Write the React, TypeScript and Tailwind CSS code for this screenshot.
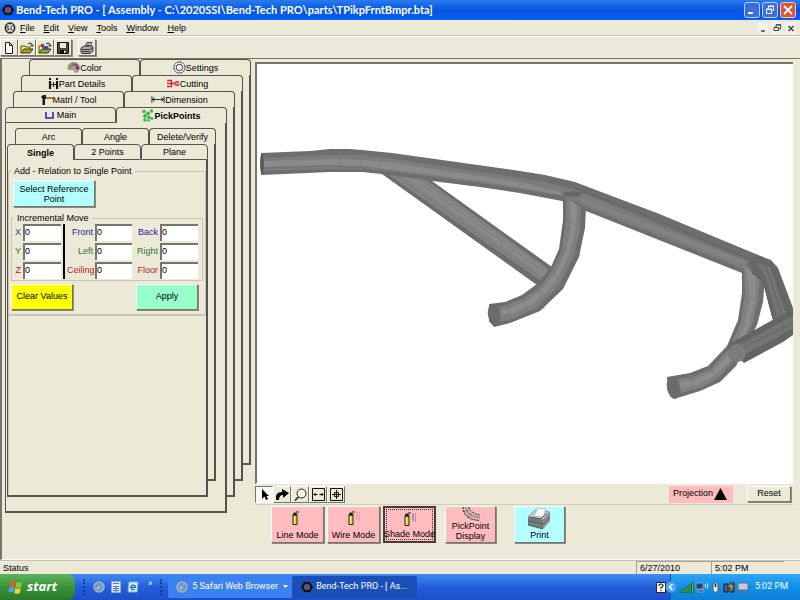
import type { ReactNode } from "react";

type Tab = { label: string; icon?: ReactNode; active?: boolean };

const raised = "border border-t-white border-l-white border-r-[#77756a] border-b-[#77756a] shadow-[1px_1px_0_#8d8b80]";

/* ---------- icons ---------- */

function AppIcon() {
  return (
    <svg className="w-3 h-3 shrink-0" viewBox="0 0 12 12">
      <circle cx="6" cy="6" r="4.6" fill="#1c1830" stroke="#111" strokeWidth="1.4" />
      <path d="M0 6h2M10 6h2M3 1l1 1M9 1L8 2M3 11l1-1M9 11l-1-1" stroke="#111" strokeWidth="1.3" />
      <path d="M4 4h4v4H4zM4 6h4" stroke="#9a7a9a" fill="none" />
    </svg>
  );
}

function DocIcon() {
  return (
    <svg className="w-3 h-3 shrink-0" viewBox="0 0 12 12">
      <ellipse cx="6" cy="6" rx="4.6" ry="5" fill="#eee" stroke="#222" strokeWidth="1.6" />
      <path d="M5 4H3v2h2v2H3M9 4H7v4h2M5 2h2M5 10h2" stroke="#333" fill="none" strokeWidth=".9" />
    </svg>
  );
}

function NewIcon() {
  return (
    <svg className="w-3 h-3" viewBox="0 0 12 12">
      <path d="M2.5.5h4l3 3v8h-7z" fill="#fff" stroke="#222" />
      <path d="M6.5.5v3h3" fill="none" stroke="#222" />
    </svg>
  );
}

function OpenIcon({ parts = false }: { parts?: boolean }) {
  return (
    <svg className="w-[14px] h-3" viewBox="0 0 14 12">
      <path d="M1 11V4h4l1 1h4v2" fill="#f3ea6a" stroke="#55500c" />
      <path d="M1 11l3-4h9l-3 4z" fill="#a8a01e" stroke="#3c390a" />
      <path d="M8 2q2-2 4 0v2M10.500 3L12 4.500 13.500 3" fill="none" stroke="#222" />
      {parts && (
        <>
          <path d="M3 2h3v3H3z" fill="#d22" />
          <path d="M6 4h4v4H6z" fill="#1c54d0" />
          <path d="M4 5h2v2H4z" fill="#2a9a3a" />
        </>
      )}
    </svg>
  );
}

function SaveIcon() {
  return (
    <svg className="w-3 h-3" viewBox="0 0 12 12">
      <path d="M.5.5h11v11h-11z" fill="#4b4b28" stroke="#111" />
      <path d="M3 1h6v5H3z" fill="#e8e8e0" />
      <path d="M3 8h6v3.500H3z" fill="#111" />
      <path d="M7 8.500h1.500v2.500H7z" fill="#eee" />
    </svg>
  );
}

function PrinterSmall() {
  return (
    <svg className="w-[14px] h-3" viewBox="0 0 14 12">
      <path d="M5 5l2-4.500h5L10 5z" fill="#fff" stroke="#333" strokeWidth=".9" />
      <path d="M1 6l3-2h8l1 1v4l-3 2.500H2L1 10z" fill="#a8a8a8" stroke="#222" strokeWidth=".9" />
      <path d="M1.500 7.500h8.500l3-2M2 9.500h8M7 2h3M6.500 3.500h3" stroke="#222" strokeWidth=".8" fill="none" />
    </svg>
  );
}

const paletteIcon = (
  <svg className="w-[13px] h-[11px]" viewBox="0 0 13 11">
    <path d="M1 6C1 2 4 .5 7 .5s5.500 2 5.500 5-2 5-3.500 5-1-3-3-3-5 1-5-1.500z" fill="#a99a94" stroke="#8a7570" strokeWidth=".7" />
    <circle cx="3.500" cy="4.500" r="1.400" fill="#4bb02e" />
    <circle cx="6" cy="2.600" r="1.300" fill="#d83a2c" />
    <circle cx="9" cy="3.200" r="1.400" fill="#7b3fb8" />
    <circle cx="10.500" cy="6" r="1.400" fill="#2d2f8e" />
    <circle cx="9.500" cy="8.500" r="1.100" fill="#c8a23a" />
  </svg>
);

const gearIcon = (
  <svg className="w-[13px] h-[13px]" viewBox="0 0 13 13">
    <circle cx="6.500" cy="6.500" r="5.600" fill="#eee" stroke="#222" strokeDasharray="2.200 .7" />
    <circle cx="6.500" cy="6.500" r="3.200" fill="#fff" stroke="#334" />
  </svg>
);

const partIcon = (
  <svg className="w-[11px] h-[11px]" viewBox="0 0 11 11">
    <path d="M2 3v8M9 3v8" stroke="#111" strokeWidth="2.200" />
    <path d="M1 0h2v2H1zM8 0h2v2H8z" fill="#111" />
    <path d="M3 6.500h5M5.500 4v5" stroke="#111" />
  </svg>
);

const cuttingIcon = (
  <svg className="w-[13px] h-[9px]" viewBox="0 0 13 9">
    <path d="M0 1.500h4.500v6H0M0 4.500h8" fill="none" stroke="#d8262a" strokeWidth="1.300" />
    <path d="M6 4.500l3-2.500h3v5H9z" fill="#e04a48" />
    <path d="M9 4.500h4" stroke="#f4b4b0" />
  </svg>
);

const hammerIcon = (
  <svg className="w-[12px] h-[10px]" viewBox="0 0 12 10">
    <path d="M4 3h8" stroke="#c47a1c" strokeWidth="2" />
    <path d="M0 2l2-2h3v4H4v6H1.500V4z" fill="#1a1a1a" />
  </svg>
);

const dimensionIcon = (
  <svg className="w-[14px] h-[9px]" viewBox="0 0 15 9">
    <path d="M1 1v7M14 1v7M1 4.500h13M4 2.500l-2.500 2L4 6.500M11 2.500l2.500 2-2.500 2" fill="none" stroke="#222" />
  </svg>
);

const mainIcon = (
  <svg className="w-[9px] h-[7px] mr-[3px]" viewBox="0 0 9 7">
    <path d="M1 0v6h7V0" fill="none" stroke="#2a24c8" strokeWidth="1.600" />
  </svg>
);

const pickIcon = (
  <svg className="w-[12px] h-[13px]" viewBox="0 0 12 13" fill="#35b84a">
    <circle cx="2" cy="2.500" r="1.700" />
    <circle cx="6" cy="4.500" r="1.900" />
    <circle cx="9.500" cy="2" r="1.700" />
    <circle cx="3" cy="7" r="1.900" />
    <circle cx="7" cy="8.500" r="1.700" />
    <circle cx="3" cy="11" r="1.800" />
    <circle cx="10" cy="9.500" r="1.500" />
    <circle cx="6.500" cy="11.500" r="1.200" />
  </svg>
);

function SprayCan({ spray }: { spray: "none" | "light" | "dark" }) {
  return (
    <svg className="w-[22px] h-[15px]" viewBox="0 0 22 15">
      <path d="M6 4h4v9.500H6z" fill="#e9cf2a" stroke="#222" />
      <path d="M6 4l1-2h2l1 2zM9 1h3" fill="#222" stroke="#222" />
      <path d="M7.500 5v8" stroke="#fff79a" />
      {spray !== "none" && (
        <path
          d="M13 2l2-1v9l-2-2zM16 1h1v9h-1z"
          fill={spray === "dark" ? "#8f8a90" : "#dba6aa"}
          opacity=".8"
        />
      )}
    </svg>
  );
}

function PickPipe() {
  return (
    <svg className="w-5 h-[14px] shrink-0" viewBox="0 0 20 14" fill="none">
      <path d="M5 0q0 10 14 11" stroke="#d9b0b2" strokeWidth="6" />
      <path d="M2 0q0 12 16 13.500M8 0q1 6 11 8" stroke="#222" strokeDasharray="2 1" />
      <path d="M5 0q0 9 14 10.500M3 5l5-2M7 10l3-4" stroke="#444" strokeDasharray="1 1" />
    </svg>
  );
}

function PrinterBig() {
  return (
    <svg className="w-[25px] h-[23px] shrink-0" viewBox="0 0 25 23">
      <path d="M1 10L8 3l15 2v9l-7 8L1 18z" fill="#8d8d90" />
      <path d="M1 10l7-7 15 2-7 8z" fill="#c9cccb" stroke="#777" strokeWidth=".6" />
      <path d="M7 9l4-8 8 1-3 8z" fill="#fff" stroke="#999" strokeWidth=".6" />
      <path d="M3 10l11 2 6-6" fill="none" stroke="#555" />
      <path d="M1 14l15 3 7-7M1 18l15 4" stroke="#555" fill="none" strokeWidth=".9" />
      <path d="M3 15l10 2v2L3 17z" fill="#6fa37d" />
      <path d="M1 10l15 3v9L1 18z" fill="#57575b" opacity=".35" />
    </svg>
  );
}

function Globe() {
  return (
    <svg className="w-3 h-3 shrink-0" viewBox="0 0 12 12">
      <circle cx="6" cy="6" r="5" fill="#5f9bd6" stroke="#a9b4bf" strokeWidth="1.500" />
      <path d="M8.500 3L6.800 6.800 3.500 9l1.700-3.800z" fill="#e8e2dc" />
      <path d="M8.500 3L6.800 6.800 5.200 5.200z" fill="#c86a5c" />
    </svg>
  );
}

function WindowsFlag() {
  return (
    <svg className="w-[15px] h-[14px]" viewBox="0 0 15 14">
      <path d="M2.500 2Q5 0 7.500 1.500L6.500 6.500Q4 5 1.500 6.500z" fill="#ee5a2c" />
      <path d="M8.500 2Q11 3.500 14 2l-1 5q-3 1.500-5.500 0z" fill="#8ccb3e" />
      <path d="M1.300 7.500Q4 6 6.300 7.500l-1 5Q3 11 .3 12.500z" fill="#5a9bf0" />
      <path d="M7.300 8q2.700 1.500 5.500 0l-1 5Q9 14.500 6.300 13z" fill="#f8cf3a" />
    </svg>
  );
}

/* ---------- stacked tab control ---------- */

function TabRow({ tabs, indent, front }: { tabs: Tab[]; indent: string; front: boolean }) {
  return (
    <div role="tablist" className={`flex h-4 ${indent}`}>
      {tabs.map((t) => (
        <button
          key={t.label}
          role="tab"
          aria-selected={!!t.active}
          className={`flex flex-1 items-center justify-center whitespace-nowrap rounded-t-[4px] border border-[#55534a] leading-3 ${
            front && !t.active ? "" : "border-b-0"
          } ${t.active ? "font-bold" : ""}`}
        >
          {t.icon}
          {t.label}
        </button>
      ))}
    </div>
  );
}

const indents = ["", "ml-2", "ml-4", "ml-6"];

// rows go from the back sheet to the front one; every sheet behind shows 8px at the right
function TabStack({ rows, edge, children }: { rows: Tab[][]; edge: string; children: ReactNode }) {
  const [row, ...rest] = rows;
  const front = rest.length === 0;
  return (
    <div className="flex min-w-0 flex-1 flex-col">
      <TabRow tabs={row} indent={indents[rest.length]} front={front} />
      {front ? (
        <div className={`flex flex-col border-b-2 border-l border-r-2 border-[#55534a] ${edge}`}>
          {children}
        </div>
      ) : (
        <div className="flex items-start">
          <TabStack rows={rest} edge={edge}>
            {children}
          </TabStack>
          <div className={`w-2 shrink-0 border-b-2 border-r-2 border-[#55534a] ${edge}`} />
        </div>
      )}
    </div>
  );
}

const mainTabs: Tab[][] = [
  [{ label: "Color", icon: paletteIcon }, { label: "Settings", icon: gearIcon }],
  [{ label: "Part Details", icon: partIcon }, { label: "Cutting", icon: cuttingIcon }],
  [{ label: "Matrl / Tool", icon: hammerIcon }, { label: "Dimension", icon: dimensionIcon }],
  [{ label: "Main", icon: mainIcon }, { label: "PickPoints", icon: pickIcon, active: true }],
];

const pointTabs: Tab[][] = [
  [{ label: "Arc" }, { label: "Angle" }, { label: "Delete/Verify" }],
  [{ label: "Single", active: true }, { label: "2 Points" }, { label: "Plane" }],
];

function Field({ name, color }: { name: string; color: string }) {
  return (
    <>
      <label htmlFor={name} className={`self-center text-right ${color}`}>
        {name}
      </label>
      <input
        id={name}
        defaultValue="0"
        className="h-[17px] w-full min-w-0 border-l-2 border-t-2 border-[#77756a] bg-white pb-[3px] text-[9px] leading-3"
      />
    </>
  );
}

function PointForm() {
  return (
    <>
      <fieldset className="mt-[5px] min-w-0 border border-[#c9c6b5] px-[2px] pb-1">
        <legend className="px-[3px] leading-3">Add - Relation to Single Point</legend>
        <button className={`mt-[3px] ml-[2px] h-[27px] w-[82px] bg-[#b2ffff] leading-[10px] ${raised}`}>
          Select Reference Point
        </button>
        <fieldset className="mt-[5px] min-w-0 border border-[#c9c6b5] pl-[2px] pb-px">
          <legend className="px-[3px] leading-3">Incremental Move</legend>
          <div className="grid grid-cols-[7px_38px_2px_26px_37px_24px_38px] gap-x-[2px] gap-y-[2px]">
            <Field name="X" color="text-[#3a36a8]" />
            <div className="row-span-3 bg-black" />
            <Field name="Front" color="text-[#1a1a9c]" />
            <Field name="Back" color="text-[#1a1a9c]" />
            <Field name="Y" color="text-[#2c7a2c]" />
            <Field name="Left" color="text-[#2c7a2c]" />
            <Field name="Right" color="text-[#2c7a2c]" />
            <Field name="Z" color="text-[#b01c24]" />
            <Field name="Ceiling" color="text-[#b01c24]" />
            <Field name="Floor" color="text-[#b01c24]" />
          </div>
        </fieldset>
        <div className="mt-[3px] mr-[5px] flex justify-between">
          <button className={`h-[26px] w-[62px] bg-[#ffff00] ${raised}`}>Clear Values</button>
          <button className={`h-[26px] w-[62px] bg-[#97ffca] ${raised}`}>Apply</button>
        </div>
      </fieldset>
      <div className="flex-1 border-l border-t border-[#c9c6b5]" />
    </>
  );
}

/* ---------- 3D view ---------- */

function Model() {
  return (
    <svg className="h-full w-full" viewBox="257 64 536 420" preserveAspectRatio="xMinYMin slice" fill="none" strokeLinejoin="round">
      {/* diagonal brace */}
      <path d="M382 174L388 160 415 168 432 181 552 267 537 285z" fill="#6c6c6c" />
      <path d="M386 173L410 168 550 270 541 281z" fill="#828282" />
      <path d="M391 168L410 173 549 272 545 277z" fill="#8a8a8a" />
      <path d="M388 170L542 279M400 169L549 275" stroke="#7a7a7a" strokeWidth=".8" />

      {/* main tube */}
      <path d="M261 153L310 151 330 149 350 149 362 150 392 153 520 171 545 175 575 182 617 198 657 213 763 257 770 268 762 280 742 273 586 211 562 201 520 193 480 187 432 181 382 174 362 172 330 172 261 175z" fill="#6e6e6e" />
      <path d="M263 158L330 155 362 155 395 159 520 178 545 182 573 189 615 206 750 262 743 269 586 207 562 196 520 189 480 183 390 171 362 169 330 169 263 171z" fill="#7c7c7c" />
      <path d="M263 161L335 159 365 160 395 163 520 182 560 192 562 195 480 181 385 169 365 166 330 165 263 167z" fill="#8b8b8b" />
      <path d="M578 197L745 261 742 265 582 202z" fill="#838383" />
      <path d="M575 188L660 221 752 260" stroke="#666" strokeWidth="1.200" />
      <path d="M340 150v22M360 151l1 21M382 153l-4 20M521 172l-2 20M545 175l-6 21" stroke="#7a7a7a" strokeWidth=".6" />
      <path d="M262 168L330 166 370 168" stroke="#747474" />
      <ellipse cx="262" cy="164" rx="2" ry="11" fill="#5d5d5d" />

      {/* right leg */}
      <path d="M742 272L742 293 738 320 727 346 708 366 690 373 667 377 668 392 674 399 700 391 720 382 736 366 757 325 763 302 765 278 752 270z" fill="#6e6e6e" />
      <path d="M744 265L745 295 741 322 730 348 711 369 692 377 678 379 681 393 702 387 718 378 733 361 752 325 758 300 760 276 750 268z" fill="#828282" />
      <path d="M746 268L750 297 745 326 731 353 712 372 694 380 680 383 680 388 697 385 716 375 735 355 749 326 755 299 756 275z" fill="#8d8d8d" />
      <path d="M742 299h21M728 348l9 14M708 366l12 15M690 373l3 18" stroke="#757575" strokeWidth=".8" />
      <ellipse cx="673" cy="388" rx="6" ry="11" fill="#6b6b6b" transform="rotate(-12 673 388)" />

      {/* far end of the main tube */}
      <path d="M748 262L756 255 763 257 771 260 778 268 793 308 793 320 773 320 763 281 752 273z" fill="#676767" />
      <path d="M756 262L770 267 787 318 777 318 766 278z" fill="#757575" />
      <path d="M765 264L783 318M770 262L790 314" stroke="#5f5f5f" strokeWidth=".9" />

      {/* middle leg */}
      <path d="M563 195L563 220 559 249 551 267 537 284 522 295 505 302 489 304 489 321 494 327 510 323 540 311 563 289 579 257 585 228 586 207 575 202z" fill="#6d6d6d" />
      <path d="M566 197L566 221 562 250 553 269 540 287 524 298 507 305 499 307 500 322 512 319 537 308 559 286 574 256 580 228 581 207z" fill="#7f7f7f" />
      <path d="M569 200L571 224 566 251 556 272 542 289 526 301 508 309 502 310 502 315 514 313 534 304 555 283 569 255 576 228 577 206z" fill="#8d8d8d" />
      <path d="M563 221l22 6M560 249l20 6M551 268l13 20M537 284l7 25M522 295l6 21M507 302l5 20" stroke="#777" strokeWidth=".7" />
      <path d="M563 193l11-2 9 2-6 4-12-1z" fill="#666" />
      <ellipse cx="494" cy="315" rx="6" ry="11" fill="#6b6b6b" transform="rotate(-10 494 315)" />

      {/* cross tube coming towards the viewer */}
      <path d="M727 347L731 343 778 317 793 311 793 335 783 342 744 363z" fill="#646464" />
      <path d="M736 345L782 321 793 316 793 328 778 337 744 355z" fill="#757575" />
      <path d="M742 348L793 323M740 345L782 321M780 318l6 21" stroke="#5f5f5f" strokeWidth=".8" />
      <circle cx="737" cy="353" r="9" fill="#7c7c7c" />
      <path d="M752 273L763 281 773 319" stroke="#5d5d5d" />
    </svg>
  );
}

/* ---------- view tools ---------- */

const viewTools: { label: string; icon: ReactNode }[] = [
  { label: "Select", icon: <path d="M4 1v10l2.500-2.500L8 12l2-1-1.500-3H11z" fill="#000" /> },
  { label: "Rotate", icon: <path d="M0 12V8q1-4 6-4V1l7 4-6 5V7Q3 7 3 12z" fill="#000" /> },
  {
    label: "Zoom",
    icon: (
      <>
        <circle cx="7.500" cy="5.500" r="4.500" fill="#f4f4ee" stroke="#222" />
        <path d="M4.500 9L1 12.500" stroke="#222" strokeWidth="1.600" />
      </>
    ),
  },
  { label: "Fit width", icon: <path d="M.5.5h12v12H.5zM2 6.500h3.500M7.500 6.500H11M3.500 5L2 6.500 3.500 8M9.500 5L11 6.500 9.500 8" stroke="#111" /> },
  { label: "Fit all", icon: <path d="M.5.5h12v12H.5zM2 6.500h9M6.500 2v9M4.500 4.500h4v4h-4z" stroke="#111" /> },
];

const modes: { label: string; spray: "none" | "light" | "dark" }[] = [
  { label: "Line Mode", spray: "none" },
  { label: "Wire Mode", spray: "light" },
  { label: "Shade Mode", spray: "dark" },
];

function ViewPanel() {
  return (
    <main className="ml-1 flex min-w-0 flex-1 flex-col pr-[7px] pt-[3px]">
      <div className="min-h-0 flex-1 basis-0 overflow-hidden border-l-2 border-t-2 border-b border-[#77756a] border-b-white bg-white">
        <Model />
      </div>
      <div className="flex h-[21px] items-center border-b border-[#d2cfbf]">
        <div className="flex">
          {viewTools.map((t, i) => (
            <button
              key={t.label}
              aria-label={t.label}
              className={`flex h-[17px] w-[18px] items-center justify-center border ${
                i === 0 ? "border-[#77756a] border-b-white border-r-white bg-[#f8f7f0]" : "border-white border-b-[#77756a] border-r-[#77756a]"
              }`}
            >
              <svg className="h-[13px] w-[13px]" viewBox="0 0 13 13" fill="none">
                {t.icon}
              </svg>
            </button>
          ))}
        </div>
        <button className="ml-auto flex h-[17px] w-16 items-center justify-between bg-[#ffbcbe] pl-1 pr-[6px]">
          Projection
          <svg className="h-3 w-[13px]" viewBox="0 0 13 12">
            <path d="M6.500 0L13 12H0z" fill="#000" />
          </svg>
        </button>
        <button className={`ml-[14px] mr-[2px] h-4 w-[44px] ${raised}`}>Reset</button>
      </div>
      <div className="flex pb-4 pl-4 pt-px">
        {modes.map((m) => (
          <button
            key={m.label}
            className={`mr-[3px] flex h-[37px] w-[53px] flex-col items-center justify-between whitespace-nowrap bg-[#ffbcbe] pb-px pt-1 leading-3 ${
              m.spray === "dark" ? "border-2 border-[#4a3a38] outline-1 outline-dotted outline-[#333] -outline-offset-4" : raised
            }`}
          >
            <SprayCan spray={m.spray} />
            {m.label}
          </button>
        ))}
        <button className={`ml-[6px] flex h-[37px] w-[51px] flex-col items-center bg-[#ffbcbe] leading-[10px] ${raised}`}>
          <PickPipe />
          PickPoint Display
        </button>
        <button className={`ml-[18px] flex h-[37px] w-[51px] flex-col items-center bg-[#b2ffff] leading-[11px] ${raised}`}>
          <PrinterBig />
          Print
        </button>
      </div>
    </main>
  );
}

/* ---------- window frame ---------- */

function TitleBar() {
  return (
    <header className="flex h-5 items-center bg-linear-to-b from-[#2a7cf0] via-[#0553dd] to-[#0660f8] pl-[2px] pr-1 text-white">
      <AppIcon />
      <h1 className="ml-[2px] truncate font-[Lato,sans-serif] text-[11px] font-bold leading-4">
        Bend-Tech PRO - [ Assembly - C:\2020SSI\Bend-Tech PRO\parts\TPikpFrntBmpr.bta]
      </h1>
      <div className="ml-auto flex gap-[2px]">
        <button aria-label="Minimize" className="h-4 w-4 rounded-[3px] border border-[#bcd2fa] bg-[#3b6fe0]">
          <svg viewBox="0 0 14 14"><path d="M3 10h5" stroke="#fff" strokeWidth="2" /></svg>
        </button>
        <button aria-label="Restore" className="h-4 w-4 rounded-[3px] border border-[#bcd2fa] bg-[#3b6fe0]">
          <svg viewBox="0 0 14 14" fill="none" stroke="#fff"><path d="M3.500 6.500h5v4h-5zM5.500 6V3.500h5v4H9M3 6h6M5 3h6" /></svg>
        </button>
        <button aria-label="Close" className="h-4 w-4 rounded-[3px] border border-[#f3cabf] bg-[#dc5535]">
          <svg viewBox="0 0 14 14"><path d="M3 3l8 8M11 3l-8 8" stroke="#fff" strokeWidth="1.800" /></svg>
        </button>
      </div>
    </header>
  );
}

function MenuBar() {
  const menus = ["File", "Edit", "View", "Tools", "Window", "Help"];
  return (
    <nav className="flex h-4 items-center border-b border-[#c5c2b2] pl-1 pr-1">
      <DocIcon />
      <div className="ml-1 flex gap-[9px]">
        {menus.map((m) => (
          <button key={m} className="leading-3">
            <span className="underline">{m[0]}</span>
            {m.slice(1)}
          </button>
        ))}
      </div>
      <div className="ml-auto flex gap-1 text-[#444]">
        <button aria-label="Minimize document" className="h-3 w-[10px] bg-[#f3f1e8]">
          <svg viewBox="0 0 10 12"><path d="M3 9h4" stroke="currentColor" strokeWidth="1.500" /></svg>
        </button>
        <button aria-label="Restore document" className="h-3 w-[10px] bg-[#f3f1e8]">
          <svg viewBox="0 0 10 12" fill="none" stroke="currentColor"><path d="M2 5.500h4.500v3H2zM4 5V3h4.500v4H7M4 2.700h5" /></svg>
        </button>
        <button aria-label="Close document" className="h-3 w-[10px] bg-[#f3f1e8]">
          <svg viewBox="0 0 10 12"><path d="M2.500 4l5 5M7.500 4l-5 5" stroke="currentColor" strokeWidth="1.500" /></svg>
        </button>
      </div>
    </nav>
  );
}

function ToolBar() {
  const tool = `flex h-[17px] w-[18px] items-center justify-center ${raised}`;
  return (
    <div className="flex h-[22px] items-center border-t border-white">
      <button aria-label="New" className={tool}><NewIcon /></button>
      <button aria-label="Open" className={tool}><OpenIcon /></button>
      <button aria-label="Open part" className={tool}><OpenIcon parts /></button>
      <button aria-label="Save" className={tool}><SaveIcon /></button>
      <button aria-label="Print" className={`ml-[6px] ${tool}`}><PrinterSmall /></button>
    </div>
  );
}

function TaskBar() {
  return (
    <footer className="flex h-[26px] items-center whitespace-nowrap bg-linear-to-b from-[#3f8cf3] via-[#245edb] to-[#1c4fc8] font-[Roboto,sans-serif] text-[9px] text-white">
      <button className="flex h-full w-[75px] items-center gap-1 rounded-r-[8px] bg-linear-to-b from-[#5eb35c] via-[#389438] to-[#2b7a2b] pl-2 font-['Open_Sans',sans-serif] text-[13px] font-bold italic">
        <WindowsFlag />
        start
      </button>
      <div className="ml-2 h-4 border-l-2 border-dotted border-[#163a9c]" />
      <div className="ml-2 flex items-center gap-[6px]">
        <Globe />
        <svg className="h-3 w-[10px]" viewBox="0 0 10 12">
          <path d="M.5.5h9v11h-9z" fill="#dfe8fb" stroke="#8fa8dc" />
          <path d="M2 2.500h6M2 5.500h6M2 7.500h6M2 9.500h6M5 5v6" stroke="#5877c0" />
        </svg>
        <svg className="h-3 w-3" viewBox="0 0 12 12">
          <path d="M2 1h9l-1 10H1z" fill="#d5ecfa" stroke="#79b4e2" />
          <path d="M3.500 6.300h5a2.300 2.300 0 1 0-1 2" fill="none" stroke="#1c6fb0" strokeWidth="1.300" />
        </svg>
      </div>
      <button aria-label="More quick launch items" className="mb-2 ml-[9px] leading-3">»</button>
      <div className="ml-2 h-4 border-l-2 border-dotted border-[#163a9c]" />
      <button className="ml-[6px] flex h-[22px] w-[124px] items-center gap-1 rounded-[2px] bg-[#3c81f0] pl-2 pr-1">
        <Globe />
        5 Safari Web Browser
        <svg className="ml-auto h-1 w-[5px]" viewBox="0 0 5 4"><path d="M0 0h5L2.500 3z" fill="#fff" /></svg>
      </button>
      <button className="flex h-[22px] w-[125px] items-center gap-[3px] rounded-[2px] bg-[#1b4fb8] pl-[9px]">
        <AppIcon />
        Bend-Tech PRO - [ As...
      </button>
      <div className="ml-auto flex h-full items-center gap-1">
        <svg className="h-[11px] w-[10px]" viewBox="0 0 10 11">
          <path d="M.5.5h9v10h-9z" fill="#fffde8" stroke="#222" />
          <path d="M3 4q0-2 2-2t2 1.500Q7 5 5 5.500V7M5 8v1.300" fill="none" stroke="#222" strokeWidth="1.200" />
        </svg>
        <div className="flex h-full w-[130px] items-center border-l border-[#0d5bb8] bg-linear-to-b from-[#2fa6f5] via-[#118fea] to-[#0d7fd6] pr-3">
          <svg className="-ml-[6px] h-3 w-3 shrink-0" viewBox="0 0 12 12">
            <circle cx="6" cy="6" r="5.500" fill="#4ba4f2" />
            <path d="M7.500 3L4.500 6l3 3" fill="none" stroke="#fff" strokeWidth="1.600" />
          </svg>
          <svg className="ml-[2px] h-[13px] w-[72px]" viewBox="0 0 72 13">
            <path d="M2 12V9M5 12V7M8 12V5M11 12V3M13.500 12V1" stroke="#1c5b2c" strokeWidth="2.400" />
            <path d="M2 11.500V9.500M5 11.500V7.500M8 11.500V5.500M11 11.500V3.500M13.500 11.500V1.500" stroke="#3fd25a" />
            <path d="M17 2h7v6h-7zM19 9h6v2h-6z" fill="#26406e" stroke="#8fb4e0" strokeWidth=".8" />
            <path d="M26 3q1.500 2 0 4M28 2q2 3 0 6" fill="none" stroke="#cfe6ff" />
            <path d="M34 3q3-3 5 0v7q-2 3-5 0z" fill="#e6e6e6" stroke="#555" />
            <path d="M36.500 3v3" stroke="#222" strokeWidth="1.500" />
            <path d="M45 3h4v8h-4zM51 2h4v9h-4z" fill="#56617c" stroke="#151c30" />
            <path d="M53 1l-4 5h3l-2 5 5-6h-3z" fill="#f2b63c" stroke="#70440c" strokeWidth=".5" />
            <path d="M59 2h10v7H59z" fill="#c7cbd8" stroke="#666f8a" />
            <path d="M58 11h4M65 11h4" stroke="#666f8a" strokeWidth="2" />
          </svg>
          <span className="ml-auto">5:02 PM</span>
        </div>
      </div>
    </footer>
  );
}

export default function App() {
  return (
    <div className="flex min-h-screen flex-col bg-[#ece9d8] font-['Liberation_Sans',Arial,sans-serif] text-[9px] text-black">
      <TitleBar />
      <MenuBar />
      <ToolBar />
      <div className="flex flex-1 border-b border-l-2 border-t border-[#77756a] border-b-white">
        <aside className="flex w-[249px] shrink-0 pl-[3px]">
          <TabStack rows={mainTabs} edge="h-[390px]">
            <div className="flex pl-px pr-[9px] pt-[5px]">
              <TabStack rows={pointTabs} edge="h-[337px]">
                <PointForm />
              </TabStack>
            </div>
          </TabStack>
        </aside>
        <ViewPanel />
      </div>
      <div className="flex h-[14px] items-center border-t border-[#c5c2b2] leading-3">
        <span className="flex-1 pl-[3px]">Status</span>
        <span className="w-[75px] border-l border-t border-[#a5a294] pl-[3px]">6/27/2010</span>
        <span className="mr-4 w-[73px] border-l border-t border-[#a5a294] pl-[3px]">5:02 PM</span>
      </div>
      <TaskBar />
    </div>
  );
}
